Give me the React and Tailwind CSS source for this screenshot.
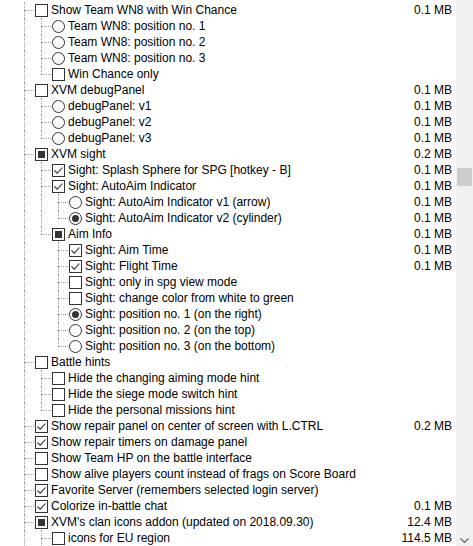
import React from 'react';

// level, kind (c = checkbox, r = radio), state (0 off, 1 on, 2 partial), label, size
const rows = [
    [1, 'c', 0, 'Show Team WN8 with Win Chance', '0.1 MB'],
    [2, 'r', 0, 'Team WN8: position no. 1', ''],
    [2, 'r', 0, 'Team WN8: position no. 2', ''],
    [2, 'r', 0, 'Team WN8: position no. 3', ''],
    [2, 'c', 0, 'Win Chance only', ''],
    [1, 'c', 0, 'XVM debugPanel', '0.1 MB'],
    [2, 'r', 0, 'debugPanel: v1', '0.1 MB'],
    [2, 'r', 0, 'debugPanel: v2', '0.1 MB'],
    [2, 'r', 0, 'debugPanel: v3', '0.1 MB'],
    [1, 'c', 2, 'XVM sight', '0.2 MB'],
    [2, 'c', 1, 'Sight: Splash Sphere for SPG [hotkey - B]', '0.1 MB'],
    [2, 'c', 1, 'Sight: AutoAim Indicator', '0.1 MB'],
    [3, 'r', 0, 'Sight: AutoAim Indicator v1 (arrow)', '0.1 MB'],
    [3, 'r', 1, 'Sight: AutoAim Indicator v2 (cylinder)', '0.1 MB'],
    [2, 'c', 2, 'Aim Info', '0.1 MB'],
    [3, 'c', 1, 'Sight: Aim Time', '0.1 MB'],
    [3, 'c', 1, 'Sight: Flight Time', '0.1 MB'],
    [3, 'c', 0, 'Sight: only in spg view mode', ''],
    [3, 'c', 0, 'Sight: change color from white to green', ''],
    [3, 'r', 1, 'Sight: position no. 1 (on the right)', ''],
    [3, 'r', 0, 'Sight: position no. 2 (on the top)', ''],
    [3, 'r', 0, 'Sight: position no. 3 (on the bottom)', ''],
    [1, 'c', 0, 'Battle hints', ''],
    [2, 'c', 0, 'Hide the changing aiming mode hint', ''],
    [2, 'c', 0, 'Hide the siege mode switch hint', ''],
    [2, 'c', 0, 'Hide the personal missions hint', ''],
    [1, 'c', 1, 'Show repair panel on center of screen with L.CTRL', '0.2 MB'],
    [1, 'c', 1, 'Show repair timers on damage panel', ''],
    [1, 'c', 0, 'Show Team HP on the battle interface', ''],
    [1, 'c', 0, 'Show alive players count instead of frags on Score Board', ''],
    [1, 'c', 1, 'Favorite Server (remembers selected login server)', ''],
    [1, 'c', 1, 'Colorize in-battle chat', '0.1 MB'],
    [1, 'c', 2, "XVM's clan icons addon (updated on 2018.09.30)", '12.4 MB'],
    [2, 'c', 0, 'icons for EU region', '114.5 MB'],
];

// is this row the last child of its parent (list continues past the bottom edge)
const isLast = rows.map((r, i) => {
    let j = i + 1;
    while (j < rows.length && rows[j][0] > r[0]) j++;
    if (j >= rows.length) return false;
    return rows[j][0] < r[0];
});

function guides(i) {
    const level = rows[i][0];
    const out = [];
    for (let k = 1; k < level; k++) {
        let j = i - 1;
        while (j >= 0 && rows[j][0] !== k) j--;
        out.push(j >= 0 ? !isLast[j] : true);
    }
    return out;
}

function Box({ kind, state }) {
    if (kind === 'r') {
        return (
            <span className="w-[13px] h-[13px] shrink-0 rounded-full border border-[#333333] bg-white flex items-center justify-center">
                {state === 1 && <span className="w-[7px] h-[7px] rounded-full bg-[#333333]" />}
            </span>
        );
    }
    return (
        <span className="w-[13px] h-[13px] shrink-0 border border-[#333333] bg-white flex items-center justify-center">
            {state === 1 && (
                <svg width="11" height="11" viewBox="0 0 11 11">
                    <polyline points="1.5,5.5 4.2,8.2 9.5,2.5" fill="none" stroke="#333333" strokeWidth="1.1" />
                </svg>
            )}
            {state === 2 && <span className="w-[7px] h-[7px] bg-[#333333]" />}
        </span>
    );
}

function Row({ row, index }) {
    const [, kind, state, label, size] = row;
    const last = isLast[index];
    return (
        <div className="flex h-4 items-center pl-4">
            {guides(index).map((cont, k) => (
                <span key={k} className="relative w-[17px] h-4 shrink-0">
                    {cont && <span className="absolute left-2 top-0 h-4 border-l border-dotted border-[#a0a0a0]" />}
                </span>
            ))}
            <span className="relative w-[19px] h-4 shrink-0">
                <span className={last ? 'absolute left-2 top-0 h-2 border-l border-dotted border-[#a0a0a0]' : 'absolute left-2 top-0 h-4 border-l border-dotted border-[#a0a0a0]'} />
                <span className="absolute left-2 top-2 w-[10px] border-t border-dotted border-[#a0a0a0]" />
            </span>
            <Box kind={kind} state={state} />
            <span className="ml-[3px] whitespace-nowrap">{label}</span>
            <span className="ml-auto pr-1 whitespace-nowrap">{size}</span>
        </div>
    );
}

export default function App() {
    return (
        <div className="w-[473px] h-[546px] flex overflow-hidden bg-white text-black text-[12px] leading-4 font-['Liberation_Sans',sans-serif]">
            <div className="flex-1 pt-[2px]">
                {rows.map((r, i) => (
                    <Row key={i} row={r} index={i} />
                ))}
            </div>

            {/* scrollbar */}
            <div className="w-[17px] bg-[#f0f0f0] flex flex-col items-center pt-[168px]">
                <div className="w-[15px] h-[18px] bg-[#cdcdcd]" />
                <div className="mt-auto mb-[2px]">
                    <svg width="9" height="6" viewBox="0 0 9 6">
                        <polyline points="0.5,0.5 4.5,4.5 8.5,0.5" fill="none" stroke="#606060" strokeWidth="1.2" />
                    </svg>
                </div>
            </div>
        </div>
    );
}
